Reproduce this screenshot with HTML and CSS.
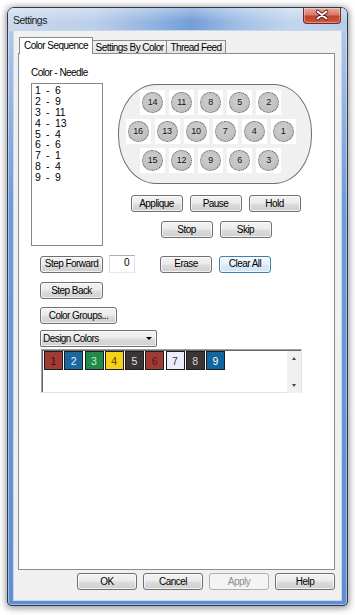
FILE: index.html
```html
<!DOCTYPE html>
<html>
<head>
<meta charset="utf-8">
<link rel="stylesheet" href="styles.css">
</head>
<body>
<div class="window">
  <div class="titlebar">
    <span class="title">Settings</span>
    <div class="close">
      <svg width="38" height="16" viewBox="0 0 38 16">
        <path d="M14.5 4.5 L23.5 11.5 M23.5 4.5 L14.5 11.5" stroke="#4b1c16" stroke-width="3.6" stroke-linecap="round" fill="none"/>
        <path d="M14.5 4.5 L23.5 11.5 M23.5 4.5 L14.5 11.5" stroke="#ffffff" stroke-width="2" stroke-linecap="round" fill="none"/>
      </svg>
    </div>
  </div>
  <div class="client">
    <div class="tabs">
      <div class="tab active">Color Sequence</div>
      <div class="tab t2">Settings By Color</div>
      <div class="tab t3">Thread Feed</div>
    </div>
    <div class="pane">
      <div class="top">
        <div class="needlecol">
          <div class="label">Color - Needle</div>
          <div class="listbox">
            <div class="li"><span class="a">1</span><span class="d">-</span><span>6</span></div>
            <div class="li"><span class="a">2</span><span class="d">-</span><span>9</span></div>
            <div class="li"><span class="a">3</span><span class="d">-</span><span>11</span></div>
            <div class="li"><span class="a">4</span><span class="d">-</span><span>13</span></div>
            <div class="li"><span class="a">5</span><span class="d">-</span><span>4</span></div>
            <div class="li"><span class="a">6</span><span class="d">-</span><span>6</span></div>
            <div class="li"><span class="a">7</span><span class="d">-</span><span>1</span></div>
            <div class="li"><span class="a">8</span><span class="d">-</span><span>4</span></div>
            <div class="li"><span class="a">9</span><span class="d">-</span><span>9</span></div>
          </div>
        </div>
        <div class="rightcol">
          <div class="plate">
            <div class="prow">
              <div class="sq"><div class="nd">14</div></div>
              <div class="sq"><div class="nd">11</div></div>
              <div class="sq"><div class="nd">8</div></div>
              <div class="sq"><div class="nd">5</div></div>
              <div class="sq"><div class="nd">2</div></div>
            </div>
            <div class="prow">
              <div class="sq"><div class="nd">16</div></div>
              <div class="sq"><div class="nd">13</div></div>
              <div class="sq"><div class="nd">10</div></div>
              <div class="sq"><div class="nd">7</div></div>
              <div class="sq"><div class="nd">4</div></div>
              <div class="sq"><div class="nd">1</div></div>
            </div>
            <div class="prow">
              <div class="sq"><div class="nd">15</div></div>
              <div class="sq"><div class="nd">12</div></div>
              <div class="sq"><div class="nd">9</div></div>
              <div class="sq"><div class="nd">6</div></div>
              <div class="sq"><div class="nd">3</div></div>
            </div>
          </div>
          <div class="btnrow r1">
            <div class="btn w52">Applique</div>
            <div class="btn w52">Pause</div>
            <div class="btn w52">Hold</div>
          </div>
          <div class="btnrow r2">
            <div class="btn w52">Stop</div>
            <div class="btn w52">Skip</div>
          </div>
        </div>
      </div>
      <div class="lower">
        <div class="steprow">
          <div class="btn w63">Step Forward</div>
          <div class="field">0</div>
          <div class="btn w52 erase">Erase</div>
          <div class="btn w52 focus">Clear All</div>
        </div>
        <div class="btn w63 stepback">Step Back</div>
        <div class="btn w77 groups">Color Groups...</div>
        <div class="combo"><span>Design Colors</span><span class="arrow"></span></div>
        <div class="colorlist">
          <div class="swatches">
            <div class="sw c1">1</div>
            <div class="sw c2">2</div>
            <div class="sw c3">3</div>
            <div class="sw c4">4</div>
            <div class="sw c5">5</div>
            <div class="sw c6">6</div>
            <div class="sw c7">7</div>
            <div class="sw c8">8</div>
            <div class="sw c9">9</div>
          </div>
          <div class="vscroll">
            <span class="up"></span>
            <span class="down"></span>
          </div>
        </div>
      </div>
    </div>
    <div class="footer">
      <div class="btn w60">OK</div>
      <div class="btn w60">Cancel</div>
      <div class="btn w60 disabled">Apply</div>
      <div class="btn w60">Help</div>
    </div>
  </div>
</div>
</body>
</html>
```
FILE: styles.css
```css
* { box-sizing: border-box; }
html, body { margin: 0; padding: 0; background: #ffffff; }
body {
  font-family: "Liberation Sans", Arial, sans-serif;
  font-size: 10px;
  letter-spacing: -0.55px;
  color: #000;
  width: 355px;
  height: 615px;
  overflow: hidden;
}
.window {
  margin: 7px 0 0 7px;
  width: 341px;
  height: 599px;
  border: 1px solid #2e3a4c;
  border-radius: 7px 7px 4px 4px;
  background: linear-gradient(to bottom, #bcd0ea 0px, #a9c3e6 40px, #6f9ad8 200px, #5f8fd3 599px);
  box-shadow: 0 1px 7px 1px rgba(0,0,0,0.45), inset 0 0 0 1px rgba(255,255,255,0.4);
  display: flex;
  flex-direction: column;
  overflow: hidden;
}
.titlebar {
  height: 23px;
  flex: none;
  display: flex;
  align-items: flex-start;
  justify-content: space-between;
  padding: 0 6px 0 5px;
  background:
    linear-gradient(to bottom, rgba(255,255,255,0.35), rgba(255,255,255,0) 60%),
    linear-gradient(to right, #c9d9ee 0%, #bccfe9 25%, #93b4e0 42%, #729dd7 54%, #9ebde5 67%, #c4d6ed 84%, #b7cce9 100%);
}
.title {
  line-height: 24px;
  font-size: 10.5px;
  letter-spacing: -0.5px;
  color: #1b1b1b;
}
.close {
  width: 38px;
  height: 16px;
  border: 1px solid #6d2a20;
  border-top: none;
  border-radius: 0 0 4px 4px;
  background: linear-gradient(to bottom, #e9a99c 0%, #d9786a 45%, #c3402e 55%, #d2563f 100%);
  box-shadow: inset 0 0 0 1px rgba(255,255,255,0.35);
}
.close svg { display: block; margin: -1px 0 0 -1px; }
.client {
  flex: 1;
  margin: 0 6px 5px 6px;
  background: #f0f0f0;
  box-shadow: 0 0 0 1px #c9d7ea;
  padding: 6px 6px 0 4px;
  display: flex;
  flex-direction: column;
}
.tabs {
  height: 16px;
  display: flex;
  align-items: flex-end;
  padding-left: 1px;
}
.tab {
  height: 13px;
  border: 1px solid #898c95;
  border-bottom: none;
  background: linear-gradient(to bottom, #f3f3f3, #e4e4e4);
  line-height: 13px;
  text-align: center;
  white-space: nowrap;
  margin-left: -1px;
}
.tab.active {
  width: 74px;
  height: 17px;
  margin-bottom: -1px;
  margin-left: 0;
  background: #ffffff;
  line-height: 15px;
  position: relative;
  z-index: 1;
}
.tab.t2 { width: 75px; }
.tab.t3 { width: 60px; }
.pane {
  width: 317px;
  height: 517px;
  border: 1px solid #898c95;
  background: #ffffff;
  padding: 12px 0 0 12px;
}
.top { display: flex; }
.needlecol { width: 72px; }
.label { height: 14px; line-height: 14px; white-space: nowrap; }
.listbox {
  margin-top: 3px;
  width: 72px;
  height: 163px;
  border: 1px solid #828790;
  padding: 1px 0 0 3px;
}
.li { display: flex; height: 10.9px; line-height: 10.9px; font-size: 10.5px; letter-spacing: -0.2px; }
.li .a { width: 10px; }
.li .d { width: 10px; padding-left: 1px; }
.rightcol {
  margin-left: 15px;
  margin-top: 18px;
  width: 194px;
  display: flex;
  flex-direction: column;
  align-items: center;
}
.plate {
  width: 194px;
  height: 100px;
  border: 1px solid #6f6f6f;
  border-radius: 38px / 48px;
  background: #f0f0f0;
  padding: 5px 9px 0 0;
  display: flex;
  flex-direction: column;
  align-items: center;
  gap: 4px;
}
.prow { display: flex; gap: 4px; }
.sq {
  width: 25px;
  height: 25px;
  background: #ffffff;
  display: flex;
  align-items: center;
  justify-content: center;
}
.nd {
  width: 21px;
  height: 21px;
  border-radius: 50%;
  border: 1px dotted #555555;
  background: radial-gradient(circle at 45% 40%, #cfcfcf 0%, #c2c2c2 60%, #b4b4b4 100%);
  font-size: 9px;
  letter-spacing: -0.3px;
  color: #111111;
  display: flex;
  align-items: center;
  justify-content: center;
  line-height: 1;
}
.btnrow { display: flex; gap: 7px; }
.r1 { margin-top: 11px; margin-left: 1px; }
.r2 { margin-top: 9px; margin-left: 2px; }
.btn {
  height: 17px;
  border: 1px solid #707070;
  border-radius: 3px;
  background: linear-gradient(to bottom, #f2f2f2 0%, #ebebeb 49%, #dddddd 51%, #cfcfcf 100%);
  box-shadow: inset 0 0 0 1px rgba(255,255,255,0.7);
  display: flex;
  align-items: center;
  justify-content: center;
  white-space: nowrap;
  line-height: 1;
}
.w52 { width: 52px; }
.w60 { width: 60px; }
.w63 { width: 63px; }
.w77 { width: 77px; }
.btn.focus {
  border-color: #3c7fb1;
  background: linear-gradient(to bottom, #f4f9fd 0%, #e8f2fa 49%, #dbeaf6 51%, #d2e4f2 100%);
}
.btn.disabled {
  border-color: #adb2b5;
  background: #f4f4f4;
  color: #8d8d8d;
  box-shadow: none;
}
.lower {
  margin-left: 9px;
  margin-top: 9px;
  display: flex;
  flex-direction: column;
  align-items: flex-start;
}
.steprow { display: flex; align-items: center; height: 18px; }
.field {
  width: 26px;
  height: 18px;
  margin-left: 6px;
  border: 1px solid #abadb3;
  border-color: #abadb3 #e2e3ea #e3e9ef #dbdfe6;
  background: #fff;
  text-align: right;
  padding-right: 5px;
  line-height: 13px;
}
.erase { margin-left: 25px; }
.focus { margin-left: 7px; }
.stepback { margin-top: 9px; }
.groups { margin-top: 8px; }
.combo {
  margin-top: 6px;
  width: 117px;
  height: 17px;
  border: 1px solid #707070;
  border-radius: 2px;
  background: linear-gradient(to bottom, #f2f2f2 0%, #ebebeb 49%, #dddddd 51%, #cfcfcf 100%);
  box-shadow: inset 0 0 0 1px rgba(255,255,255,0.7);
  display: flex;
  align-items: center;
  justify-content: space-between;
  padding: 0 4px 0 2px;
}
.arrow {
  width: 0; height: 0;
  border-left: 3px solid transparent;
  border-right: 3px solid transparent;
  border-top: 3px solid #000;
}
.colorlist {
  margin-top: 2px;
  margin-left: 1px;
  width: 261px;
  height: 44px;
  border: 1px solid;
  border-color: #a0a0a0 #e3e3e3 #e3e3e3 #a0a0a0;
  box-shadow: inset 1px 1px 0 #696969;
  background: #fff;
  display: flex;
  justify-content: space-between;
}
.swatches { display: flex; gap: 1.25px; padding: 1px 0 0 2px; height: 21px; }
.sw {
  width: 19px;
  height: 19px;
  border: 1px solid #1e1e1e;
  display: flex;
  align-items: center;
  justify-content: center;
  font-size: 10.5px;
  letter-spacing: 0;
}
.c1 { background: #a03a35; color: #3a1212; }
.c2 { background: #1d67a0; color: #e6eef6; }
.c3 { background: #1f8a49; color: #cfe9d3; }
.c4 { background: #f6d11a; color: #4e4000; }
.c5 { background: #3b3434; color: #e2e2e2; }
.c6 { background: #a03a35; color: #5a1616; }
.c7 { background: #ececfd; color: #33334a; }
.c8 { background: #3b3434; color: #d4d4d4; }
.c9 { background: #13659f; color: #ffffff; }
.vscroll {
  width: 14px;
  height: 42px;
  margin-top: 1px;
  background: #f0f0f0;
  display: flex;
  flex-direction: column;
  justify-content: space-between;
  align-items: center;
  padding: 6px 0 6px;
}
.up {
  width: 0; height: 0;
  border-left: 2.5px solid transparent;
  border-right: 2.5px solid transparent;
  border-bottom: 3px solid #444;
}
.down {
  width: 0; height: 0;
  border-left: 2.5px solid transparent;
  border-right: 2.5px solid transparent;
  border-top: 3px solid #444;
}
.footer {
  display: flex;
  justify-content: flex-end;
  gap: 6px;
  margin-top: 3px;
  padding-right: 0;
}
```
